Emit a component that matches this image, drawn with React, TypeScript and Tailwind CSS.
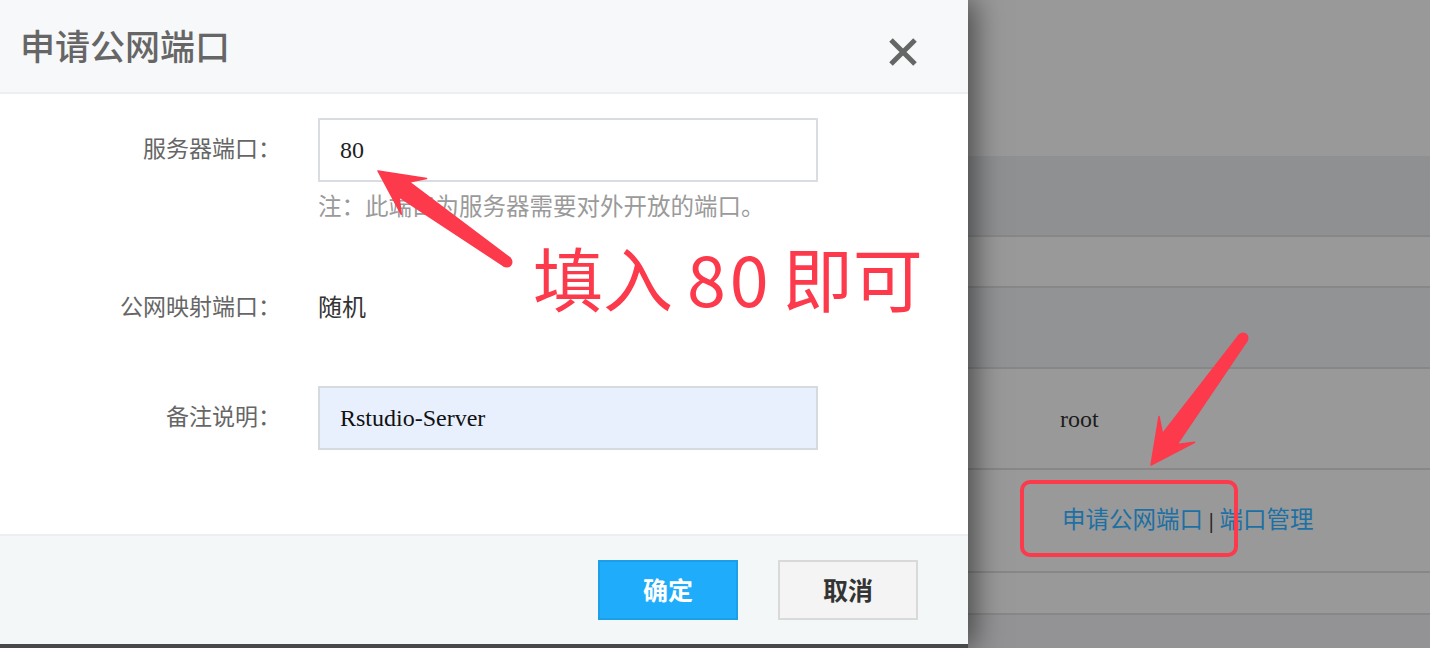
import React from "react";

const cjk = "font-['Noto_Sans_CJK_SC',sans-serif]";
const serif = "font-['Liberation_Serif','Noto_Sans_CJK_SC',serif]";

function arrowPoints(tx: number, ty: number, px: number, py: number) {
  const dx = px - tx;
  const dy = py - ty;
  const len = Math.hypot(dx, dy);
  const ux = dx / len;
  const uy = dy / len;
  const nx = -uy;
  const ny = ux;
  const headLen = 44;
  const headW = 22;
  const neck = 32;
  const w2 = 9;
  const w1 = 5;
  const pts = [
    [px, py],
    [px - ux * headLen + nx * headW, py - uy * headLen + ny * headW],
    [px - ux * neck + nx * w2, py - uy * neck + ny * w2],
    [tx + nx * w1, ty + ny * w1],
    [tx - nx * w1, ty - ny * w1],
    [px - ux * neck - nx * w2, py - uy * neck - ny * w2],
    [px - ux * headLen - nx * headW, py - uy * headLen - ny * headW],
  ];
  return pts.map((p) => p.map((v) => v.toFixed(1)).join(",")).join(" ");
}

function Arrow({ from, to }: { from: [number, number]; to: [number, number] }) {
  return (
    <g fill="#fc3a4b">
      <polygon points={arrowPoints(from[0], from[1], to[0], to[1])} stroke="#fc3a4b" strokeWidth={1.5} strokeLinejoin="round" />
      <circle cx={from[0]} cy={from[1]} r={5.5} />
    </g>
  );
}

function TableRow({ className, children }: { className: string; children?: React.ReactNode }) {
  return <div className={`flex shrink-0 items-center border-b-2 border-[#878787] pl-[92px] ${className}`}>{children}</div>;
}

export default function App() {
  return (
    <div className="relative flex h-[648px] w-[1430px] overflow-hidden bg-[#999999]">
      {/* dialog */}
      <div className="relative z-10 flex w-[968px] shrink-0 flex-col bg-[#484848] shadow-[6px_0_28px_rgba(0,0,0,0.55)]">
        <div className="flex h-[644px] flex-col bg-white">
          <div className="flex h-[94px] shrink-0 items-start justify-between border-b-2 border-[#eceef1] bg-[#f7f8fa] pl-[20px] pr-[50px]">
            <h1 className={`${cjk} pt-[26px] text-[35px] font-medium leading-[38px] text-[#666666]`}>申请公网端口</h1>
            <svg className="mt-[37px]" width="30" height="30" viewBox="0 0 30 30" aria-hidden="true">
              <path d="M3 3 L27 27 M27 3 L3 27" stroke="#666666" strokeWidth="5" />
            </svg>
          </div>

          <div className="flex flex-1 flex-col pt-[24px]">
            <div className="flex items-center">
              <label className={`${serif} w-[281px] text-right text-[23px] text-[#666666]`}>服务器端口：</label>
              <div className={`${serif} ml-[37px] flex h-[64px] w-[500px] items-center border-2 border-[#d9dde1] pl-[20px] text-[24px] text-[#222222]`}>
                80
              </div>
            </div>
            <p className={`${serif} ml-[318px] mt-[12px] text-[23.5px] leading-[26px] text-[#9a9a9a]`}>
              注：此端口为服务器需要对外开放的端口。
            </p>

            <div className="mt-[72px] flex items-center leading-[32px]">
              <span className={`${serif} w-[281px] text-right text-[23px] text-[#666666]`}>公网映射端口：</span>
              <span className={`${serif} ml-[37px] text-[24px] text-[#333333]`}>随机</span>
            </div>

            <div className="mt-[62px] flex items-center">
              <label className={`${serif} w-[281px] text-right text-[23px] text-[#666666]`}>备注说明：</label>
              <div className={`${serif} ml-[37px] flex h-[64px] w-[500px] items-center border-2 border-[#d6dade] bg-[#e8f0fe] pl-[20px] text-[24px] text-[#111111]`}>
                Rstudio-Server
              </div>
            </div>
          </div>

          <div className="flex h-[110px] shrink-0 items-start justify-end gap-[40px] border-t-2 border-[#eceef1] bg-[#f4f7f8] pr-[50px] pt-[24px]">
            <button className={`${cjk} h-[60px] w-[140px] border-2 border-[#1b9fe9] bg-[#1eacfb] text-[25px] font-semibold text-white`}>确定</button>
            <button className={`${cjk} h-[60px] w-[140px] border-2 border-[#d9d9d9] bg-[#f4f4f4] text-[25px] font-semibold text-[#333333]`}>取消</button>
          </div>
        </div>
      </div>

      {/* page behind the overlay */}
      <div className="flex flex-1 flex-col">
        <div className="h-[156px] shrink-0 bg-[#999999]" />
        <TableRow className="h-[81px] bg-[#8f9092]" />
        <TableRow className="h-[51px] bg-[#999999]" />
        <TableRow className="h-[81px] bg-[#929395]" />
        <TableRow className="h-[101px] bg-[#999999]">
          <span className={`${serif} text-[24px] text-[#1c1c1c]`}>root</span>
        </TableRow>
        <TableRow className="h-[103px] bg-[#999999]">
          <span className={`${serif} ml-[2px] flex items-center text-[23.5px] text-[#1c70a3]`}>
            申请公网端口
            <span className="mx-[6px] text-[20px] font-bold text-[#222222]">|</span>
            端口管理
          </span>
        </TableRow>
        <TableRow className="h-[42px] bg-[#999999]" />
        <div className="flex-1 bg-[#939395]" />
      </div>

      {/* annotations */}
      <div className="pointer-events-none absolute left-[1020px] top-[480px] z-20 h-[77px] w-[218px] rounded-[10px] border-[4px] border-[#fc3a4b]" />
      <div className={`${cjk} pointer-events-none absolute left-[533px] top-[233px] z-20 flex items-baseline text-[70px] leading-[88px] text-[#fc3a4b]`}>
        <span>填入</span>
        <span className="ml-[14px] tracking-[4px]">80</span>
        <span className="ml-[10px]">即可</span>
      </div>
      <svg className="pointer-events-none absolute left-0 top-0 z-20" width="1430" height="648" aria-hidden="true">
        <Arrow from={[507, 262]} to={[378, 171]} />
        <Arrow from={[1243, 338]} to={[1151, 465]} />
      </svg>
    </div>
  );
}
